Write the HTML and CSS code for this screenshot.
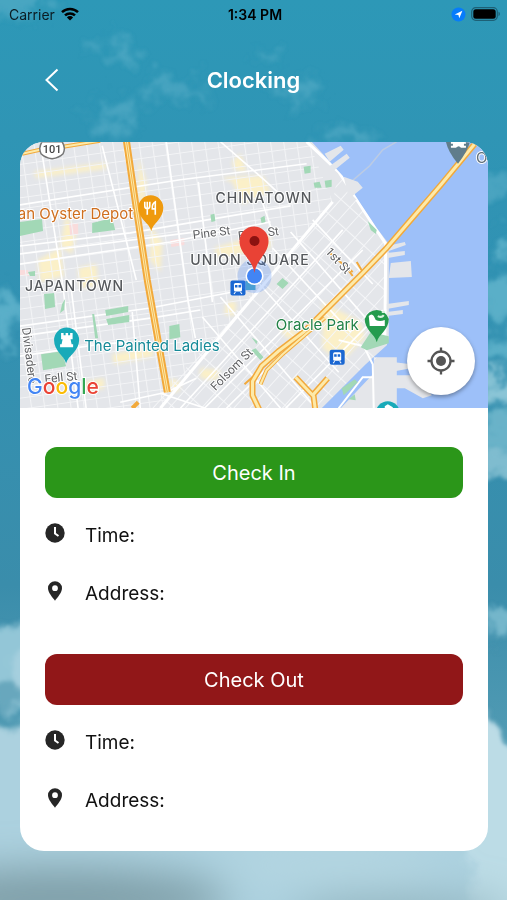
FILE: index.html
```html
<!DOCTYPE html>
<html lang="en">
<head>
<meta charset="utf-8">
<meta name="viewport" content="width=device-width, initial-scale=1">
<title>Clocking</title>
<link rel="stylesheet" href="styles.css">
</head>

<body>
<!-- sky -->
<svg class="sky" viewBox="0 0 507 900" preserveAspectRatio="xMidYMid slice" aria-hidden="true">
	<defs>
		<linearGradient id="skyFill" x1="0" y1="0" x2="0" y2="1">
			<stop offset="0" stop-color="#2d98b7"/>
			<stop offset=".3" stop-color="#3192b3"/>
			<stop offset=".65" stop-color="#3a8dab"/>
			<stop offset="1" stop-color="#69a9bc"/>
		</linearGradient>
		<filter id="wisp" x="-20%" y="-20%" width="140%" height="140%">
			<feTurbulence type="fractalNoise" baseFrequency=".04" numOctaves="5" seed="4" result="n"/>
			<feGaussianBlur in="SourceGraphic" stdDeviation="5" result="b"/>
			<feDisplacementMap in="b" in2="n" scale="50" xChannelSelector="R" yChannelSelector="G"/>
			<feGaussianBlur stdDeviation="1"/>
		</filter>
		<filter id="cloud" x="-20%" y="-20%" width="140%" height="140%">
			<feTurbulence type="fractalNoise" baseFrequency=".03" numOctaves="5" seed="9" result="n"/>
			<feGaussianBlur in="SourceGraphic" stdDeviation="3" result="b"/>
			<feDisplacementMap in="b" in2="n" scale="30" xChannelSelector="R" yChannelSelector="G"/>
			<feGaussianBlur stdDeviation="1"/>
		</filter>
		<filter id="haze" x="-30%" y="-80%" width="160%" height="260%"><feGaussianBlur stdDeviation="20"/></filter>
	</defs>
	<rect width="507" height="900" fill="url(#skyFill)"/>
	<g filter="url(#wisp)" fill="#62b4cc">
		<g opacity=".5">
			<ellipse cx="16" cy="2" rx="34" ry="14"/>
			<ellipse cx="118" cy="52" rx="20" ry="9"/>
			<ellipse cx="170" cy="90" rx="38" ry="8"/>
			<ellipse cx="112" cy="115" rx="20" ry="12"/>
			<ellipse cx="270" cy="58" rx="12" ry="5"/>
			<ellipse cx="300" cy="90" rx="20" ry="9"/>
			<ellipse cx="345" cy="135" rx="22" ry="8"/>
			<ellipse cx="505" cy="185" rx="18" ry="14"/>
		</g>
		<g opacity=".85">
			<ellipse cx="502" cy="245" rx="14" ry="10"/>
			<ellipse cx="505" cy="300" rx="28" ry="22"/>
			<ellipse cx="504" cy="350" rx="26" ry="14"/>
			<ellipse cx="508" cy="388" rx="26" ry="14" fill="#9ccfdd"/>
			<ellipse cx="504" cy="430" rx="26" ry="18" fill="#74b9cd"/>
			<ellipse cx="504" cy="462" rx="26" ry="16" fill="#8cc5d5"/>
			<ellipse cx="5" cy="320" rx="14" ry="28"/>
			<ellipse cx="508" cy="625" rx="22" ry="14" fill="#7fbdd0"/>
		</g>
	</g>
	<g filter="url(#cloud)">
		<ellipse cx="22" cy="665" rx="44" ry="46" fill="#93c6d7"/>
		<ellipse cx="6" cy="694" rx="18" ry="14" fill="#68a7bd"/>
		<ellipse cx="26" cy="668" rx="16" ry="22" fill="#a5cfde"/>
		<path d="M-40 728L30 722L240 730L470 712L490 716L512 745L560 745V960H-40Z" fill="#acd1df"/>
		<path d="M470 712L490 722L516 752L560 745V930H470Z" fill="#bcdce6"/>
	</g>
	<g filter="url(#haze)">
		<ellipse cx="60" cy="900" rx="170" ry="32" fill="#7f9fa8"/>
		<ellipse cx="400" cy="915" rx="110" ry="18" fill="#8fb1bb"/>
		<ellipse cx="330" cy="865" rx="110" ry="12" fill="#b9d9e3"/>
	</g>
</svg>

<div class="statusbar">
	<div class="carrier">
		<span>Carrier</span>
		<svg width="18" height="14" viewBox="0 0 18 14" aria-hidden="true">
			<g fill="none" stroke="#000" stroke-width="2.5">
				<path d="M1 5.2A11.4 11.4 0 0 1 17 5.2"/>
				<path d="M4 8.4A7.2 7.2 0 0 1 14 8.4"/>
			</g>
			<path d="M9 13.6L5.9 10.4A4.4 4.4 0 0 1 12.1 10.4Z"/>
		</svg>
	</div>
	<span class="clock">1:34 PM</span>
	<div class="power">
		<svg width="15" height="15" viewBox="0 0 15 15" aria-hidden="true">
			<circle cx="7.5" cy="7.5" r="7" fill="#067cfb"/>
			<path d="M11.4 3.8L8.3 11.3L7.4 7.9L3.7 7.4Z" fill="#fff"/>
		</svg>
		<svg width="30" height="14" viewBox="0 0 30 14" aria-hidden="true">
			<rect x=".7" y=".7" width="25.6" height="12.6" rx="4" fill="none" stroke="#1d6076" stroke-width="1.2"/>
			<rect x="2.3" y="2.3" width="22.4" height="9.4" rx="2.5"/>
			<path d="M27.5 4.8A2.4 2.4 0 0 1 27.5 9.2Z" fill="#1d6076"/>
		</svg>
	</div>
</div>

<header class="header">
	<a class="back" href="#" aria-label="Back">
		<svg width="14" height="24" viewBox="0 0 14 24" aria-hidden="true"><path d="M12.5 1.5L1.5 12L12.5 22.5" fill="none" stroke="#fff" stroke-width="2"/></svg>
	</a>
	<h1>Clocking</h1>
</header>

<main class="card">
	<div class="map">
		<svg class="map-view" viewBox="0 0 467 266" preserveAspectRatio="xMidYMid slice" role="img" aria-label="Map of San Francisco">
			<defs>
				<pattern id="grid" width="13" height="11" patternUnits="userSpaceOnUse" patternTransform="rotate(-8)">
					<path d="M0 .5H13M.5 0V11" stroke="#f3f4f6" stroke-width="1"/>
				</pattern>
				<pattern id="soma" width="19" height="12" patternUnits="userSpaceOnUse" patternTransform="rotate(-48)">
					<path d="M0 .5H19M.5 0V12" stroke="#f5f6f8" stroke-width="1"/>
				</pattern>
				<clipPath id="north"><path d="M0 0H288L312 60L140 266H0Z"/></clipPath>
				<clipPath id="south"><path d="M312 60L318 30L353 85L365 101V205L310 266H130Z"/></clipPath>
				<filter id="soft"><feGaussianBlur stdDeviation="2"/></filter>
			</defs>
			<rect width="467" height="266" fill="#e4e6ea"/>

			<!-- business areas -->
			<g fill="#fbf0c8" filter="url(#soft)">
				<path d="M14 30L86 21V27L16 36ZM118 15L126 40L124 60L118 58ZM130 85L142 100L140 130L130 118Z"/>
				<path d="M18 118L40 106L44 134L20 140ZM58 126L76 122L78 144L60 146ZM200 36L242 34L250 50L222 62L212 40Z"/>
				<path d="M194 106L232 95L250 92V106L198 116ZM92 212L130 205L134 214L94 222ZM206 160L216 160L214 174L204 172Z"/>
				<path d="M302 160L340 180L344 196L320 220L302 206ZM262 180L282 195L278 202L262 192ZM180 226L200 228L196 238L180 236Z"/>
				<path d="M150 236L160 240L158 250L148 248ZM46 74L56 90L52 112L40 104ZM212 20L220 12L226 30L214 28ZM62 240L84 236L84 246L62 250Z"/>
			</g>
			<g fill="#f9dcdc">
				<path d="M49 81H58V93H50ZM150 98L164 96V103L151 105ZM0 128H8L9 134H0Z"/>
			</g>

			<g clip-path="url(#north)"><rect width="467" height="266" fill="url(#grid)"/></g>
			<g clip-path="url(#south)"><rect width="467" height="266" fill="url(#soma)"/></g>

			<!-- main streets -->
			<g fill="none" stroke="#fff" stroke-width="1.6">
				<path d="M0 63L160 38L286 22M0 104L110 91L270 64M0 112L200 87M0 122L150 100L250 80"/>
				<path d="M0 184L130 166L212 150M0 194L130 176L180 168M0 214L80 202L110 200"/>
				<path d="M22 12L42 138L58 266M50 138L66 266M82 4L116 138M146 0L168 160L175 196M178 40L192 160"/>
				<path d="M240 55L252 90M112 170L120 266M104 8L120 90"/>
				<path d="M200 0L246 40L262 55"/>
				<path d="M140 266L312 60" stroke-width="3"/>
				<path d="M160 266L322 88M184 266L342 108M206 266L352 122M265 266L362 168"/>
				<path d="M182 175L260 266M200 155L292 262M230 132L318 230M252 106L330 190M270 90L352 184M292 78L352 142M140 251L185 266M100 260L146 250L176 236"/>
				<path d="M286 0L318 30L353 84L365 102L364 200" stroke-width="3"/>
			</g>

			<!-- bay -->
			<path d="M291 0L322 34L340 62L356 86L368 102V195L366 203L345 222L301 266H320L353 231V215H376V266H467V0Z" fill="#9dc0f9"/>
			<path d="M376 0L362 8L349 24L328 42" fill="none" stroke="#bccbe3" stroke-width="1.5"/>
			<g fill="#e4e6ea">
				<path d="M304 12L320 4L323 8L309 20ZM308 25L326 12L329 16L313 29ZM323 35L337 40L342 46L332 54L336 58L329 60Z"/>
				<path d="M366 104L384 100L385 103L368 109ZM366 111L384 109V113L367 116ZM370 121L390 119L391 135L368 136Z"/>
				<path d="M366 162L388 159V163L366 167ZM366 170L382 168V172L366 174ZM374 220L390 222V226L374 229ZM374 233H394L411 253L402 256L384 246H374Z"/>
			</g>
			<g fill="none" stroke="#fff" stroke-width="2">
				<path d="M365 190L343 204L352 222L353 266M353 235H342L318 266M318 198L343 204"/>
			</g>

			<!-- parks -->
			<g fill="#a2d8b6">
				<path d="M0 80L22 77L23 89L0 94ZM72 81L92 76L95 88L72 91ZM8 130L15 129V134H10ZM24 152L34 151L35 165L25 167ZM42 162L45 157L44 168L40 171Z"/>
				<path d="M85 168L108 164V170L86 174ZM86 177L109 173V180L88 183ZM149 184L159 182L160 195L149 197ZM21 212L42 209L46 224L23 228Z"/>
				<path d="M190 73L194 72L195 79L191 80ZM240 76L244 74L245 80L241 81ZM283 25L290 24V31L284 32ZM293 41L299 40L301 46L294 46ZM304 39L311 38V45L305 46Z"/>
				<path d="M256 142L262 136L268 141L262 147ZM231 208L235 206L243 215L240 218ZM231 195L237 199L236 202ZM72 172L74 172L78 196H75ZM340 205L350 190L368 194V201L346 208Z"/>
				<path d="M321 246L334 237L337 240L323 253ZM328 257L334 252L335 258ZM347 79L356 88L355 92L350 88Z"/>
			</g>

			<!-- freeways -->
			<g fill="none" stroke-linejoin="round">
				<g stroke="#f2a93b" stroke-width="7">
					<path d="M106 -2L116 66L127 138L147 250"/>
					<path d="M-2 13L20 8L43 5L80 -1" stroke-width="4"/>
					<path d="M458 -3L420 43L365 107L342 131L310 163L283 190L258 209L241 224L232 239L232 253L240 270" stroke-width="6"/>
					<path d="M304 176L262 212L246 228L240 242" stroke-width="4"/>
					<path d="M275 235L293 254L295 270M307 236L292 253" stroke-width="6"/>
					<path d="M224 242L242 226M308 110L322 122L332 130M332 134L326 126M342 130L336 120" stroke-width="2"/>
					<path d="M112 266L118 260" stroke-width="4"/>
				</g>
				<g stroke="#fdeaa9" stroke-width="3">
					<path d="M106 -2L116 66L127 138L147 250"/>
					<path d="M-2 13L20 8L43 5L80 -1" stroke-width="2"/>
					<path d="M458 -3L420 43L365 107L342 131L310 163L283 190L258 209L241 224L232 239L232 253L240 270"/>
					<path d="M304 176L262 212L246 228L240 242" stroke-width="2"/>
					<path d="M275 235L293 254L295 270M307 236L292 253"/>
				</g>
				<path d="M106 -2L116 66L127 138L147 250" stroke="#f2b653" stroke-width="1"/>
			</g>

			<!-- route shield -->
			<path d="M22 0H42Q46 6 43 12Q39 16 32 17Q25 16 21 12Q18 6 22 0Z" fill="#fff" stroke="#777" stroke-width="1.5"/>
			<text class="shield" x="32" y="11" text-anchor="middle">101</text>

			<!-- street and district names -->
			<g class="street">
				<text transform="translate(173 97) rotate(-7)">Pine St</text>
				<text transform="translate(218 98) rotate(-7)">Bush St</text>
				<text transform="translate(304 110) rotate(47)">1st St</text>
				<text transform="translate(195 249) rotate(-45)">Folsom St</text>
				<text transform="translate(25 241) rotate(-6)">Fell St</text>
				<text transform="translate(2 186) rotate(83)">Divisadero</text>
			</g>
			<g class="district">
				<text x="195" y="61">CHINATOWN</text>
				<text x="170" y="123">UNION SQUARE</text>
				<text x="5" y="149">JAPANTOWN</text>
			</g>
			<g class="place">
				<text x="113" y="77" text-anchor="end" fill="#cf6f1f">an Oyster Depot</text>
				<text x="64" y="209" fill="#168a98">The Painted Ladies</text>
				<text x="338" y="188" text-anchor="end" fill="#238247">Oracle Park</text>
				<text x="455" y="21" fill="#61727f">O</text>
			</g>

			<!-- restaurant -->
			<path d="M131 89C129 81 118 77 118 66A12.5 12.5 0 0 1 143 66C143 77 133 81 131 89Z" fill="#ef9a0e"/>
			<path d="M124.5 60V64Q124.5 67 127 67V73M127 60V67M129.500 60V64Q129.500 67 127 67M135 73V60Q131.500 62 132 67H135" fill="none" stroke="#fff" stroke-width="1.6"/>
			<!-- landmark -->
			<path d="M46 221C44 213 34 209 34 198A12.5 12.5 0 0 1 59 198C59 209 48 213 46 221Z" fill="#18aab9"/>
			<path d="M41 191H43.5V193H45.5V191H48V193H50V191H52.5V197H50.5L51.5 202H53V205H40V202H41.5L42.5 197H41Z" fill="#fff"/>
			<!-- ballpark -->
			<path d="M356 200C354 192 344 188 344 177A12.5 12.5 0 0 1 368 177C368 188 358 192 356 200Z" fill="#249b4d"/>
			<path d="M348 174Q351 171 353 174L355 178Q359 180 364 178V184H349Z" fill="#fff"/>
			<path d="M357 174Q361 176 363 173M361 170H364" fill="none" stroke="#d8f2df" stroke-width="2"/>
			<!-- bridge -->
			<path d="M425 0H449Q447 9 437 22Q427 10 425 0Z" fill="#607d8b"/>
			<path d="M430 0H445V2H443V4H445V6H440Q438 3 435 6H430V4H432V2H430Z" fill="#fff"/>
			<!-- lower pin -->
			<circle cx="367" cy="271" r="12" fill="#18aab9"/>
			<path d="M364 264L367 262L372 265V267H364Z" fill="#fff"/>

			<!-- stations -->
			<rect x="225" y="139" width="10" height="9" fill="#4ba7c8"/>
			<g id="station">
				<rect x="210" y="138.5" width="15" height="15" rx="2" fill="#1a67d2"/>
				<rect x="213.5" y="141" width="8" height="8.5" rx="1.5" fill="#fff"/>
				<path d="M214.5 143H217V145.5H214.5ZM218 143H220.5V145.5H218Z" fill="#1a67d2"/>
				<path d="M215 150L213.5 152M220 150L221.5 152" stroke="#fff"/>
			</g>
			<use href="#station" x="99" y="69"/>

			<!-- current position -->
			<circle cx="234" cy="134" r="17" fill="#4285f4" opacity=".25"/>
			<circle cx="234" cy="134" r="9" fill="#fff"/>
			<circle cx="234" cy="134" r="7.5" fill="#4285f4"/>
			<path d="M234 131C232 117 219 112 219 99A14.5 14.5 0 0 1 248 99C248 112 236 117 234 131Z" fill="#e94235"/>
			<circle cx="234" cy="99" r="5" fill="#8c1210"/>

			<text class="google" x="7" y="252"><tspan fill="#4285f4">G</tspan><tspan fill="#ea4335">o</tspan><tspan fill="#fbbc05">o</tspan><tspan fill="#4285f4">g</tspan><tspan fill="#34a853">l</tspan><tspan fill="#ea4335">e</tspan></text>
		</svg>
		<button class="locate" type="button" aria-label="My location">
			<svg width="28" height="28" viewBox="0 0 28 28" aria-hidden="true">
				<circle cx="14" cy="14" r="9.5" fill="none" stroke="#555" stroke-width="2.3"/>
				<circle cx="14" cy="14" r="5" fill="#555"/>
				<path d="M14 .5V5M14 23V27.5M.5 14H5M23 14H27.5" stroke="#555" stroke-width="2.3"/>
			</svg>
		</button>
	</div>

	<div class="content">
		<section class="entry">
			<button class="btn check-in" type="button">Check In</button>
			<div class="row">
				<svg class="icon" viewBox="0 0 20 20" aria-hidden="true">
					<circle cx="10" cy="10" r="9.7" fill="#262626"/>
					<path d="M10 4V10.5L13.5 13" fill="none" stroke="#fff" stroke-width="2"/>
				</svg>
				<span>Time:</span>
			</div>
			<div class="row">
				<svg class="icon" viewBox="0 0 20 20" aria-hidden="true">
					<path d="M10 .3A7 7 0 0 0 3 7.300C3 11.500 7.500 16.500 10 19.700C12.500 16.500 17 11.500 17 7.300A7 7 0 0 0 10 .3ZM10 4.300A2.900 2.900 0 1 1 10 10.100A2.900 2.900 0 1 1 10 4.300Z" fill="#262626" fill-rule="evenodd"/>
				</svg>
				<span>Address:</span>
			</div>
		</section>
		<section class="entry">
			<button class="btn check-out" type="button">Check Out</button>
			<div class="row">
				<svg class="icon" viewBox="0 0 20 20" aria-hidden="true">
					<circle cx="10" cy="10" r="9.7" fill="#262626"/>
					<path d="M10 4V10.5L13.5 13" fill="none" stroke="#fff" stroke-width="2"/>
				</svg>
				<span>Time:</span>
			</div>
			<div class="row">
				<svg class="icon" viewBox="0 0 20 20" aria-hidden="true">
					<path d="M10 .3A7 7 0 0 0 3 7.300C3 11.500 7.500 16.500 10 19.700C12.500 16.500 17 11.500 17 7.300A7 7 0 0 0 10 .3ZM10 4.300A2.900 2.900 0 1 1 10 10.100A2.900 2.900 0 1 1 10 4.300Z" fill="#262626" fill-rule="evenodd"/>
				</svg>
				<span>Address:</span>
			</div>
		</section>
	</div>
</main>
</body>
</html>
```

FILE: styles.css
```css
*{ margin:0; padding:0; box-sizing:border-box;}
body{ min-height:100vh; background:#3a8dab; font-family:Inter,"Liberation Sans",sans-serif; color:#111;}
button{ border:0; font-family:inherit; cursor:pointer;}
svg{ display:block;}
.sky{ position:fixed; left:0; top:0; width:100%; height:100%; z-index:-1;}

.statusbar{ display:grid; grid-template-columns:1fr auto 1fr; align-items:center; height:28px; padding:0 6px 0 9px; font-size:14px; color:#0b1c22;}
.carrier{ display:flex; align-items:center; gap:6px;}
.clock{ font-weight:600; color:#000;}
.power{ display:flex; align-items:center; justify-content:flex-end; gap:5px;}

.header{ display:grid; grid-template-columns:40px 1fr 40px; align-items:center; padding:32px 32px 42px;}
.header h1{ font-size:22px; line-height:40px; font-weight:600; color:#fff; text-align:center;}
.back{ display:flex; align-items:center; justify-content:center; height:40px;}

.card{ margin:0 19px 0 20px; background:#fff; border-radius:24px; overflow:hidden;}
.map{ position:relative;}
.map-view{ width:100%; height:266px;}
.locate{ position:absolute; right:13px; bottom:13px; display:flex; align-items:center; justify-content:center; width:68px; height:68px; border-radius:50%; background:#fff; box-shadow:0 2px 4px rgba(0,0,0,.35);}

.street{ font:12px Roboto,sans-serif; fill:#5f6063;}
.district{ font:500 14px Inter,sans-serif; fill:#55585c; letter-spacing:1px;}
.place{ font:15px Inter,sans-serif;}
.street,.district,.place{ stroke:#fff; stroke-width:2px; stroke-linejoin:round; paint-order:stroke;}
.shield{ font:500 11px Roboto,sans-serif; fill:#444;}
.google{ font:500 21px Inter,sans-serif; stroke:#fff; stroke-width:2px; paint-order:stroke;}

.content{ display:flex; flex-direction:column; gap:32px; padding:39px 25px 22px;}
.btn{ display:block; width:100%; height:51px; margin-bottom:8px; border-radius:12px; font-size:20px; color:#fff;}
.check-in{ background:#2b9619;}
.check-out{ background:#911718;}
.row{ display:flex; align-items:center; gap:20px; height:58px; font-size:19px;}
.icon{ width:20px; height:20px; margin-bottom:4px;}
```
